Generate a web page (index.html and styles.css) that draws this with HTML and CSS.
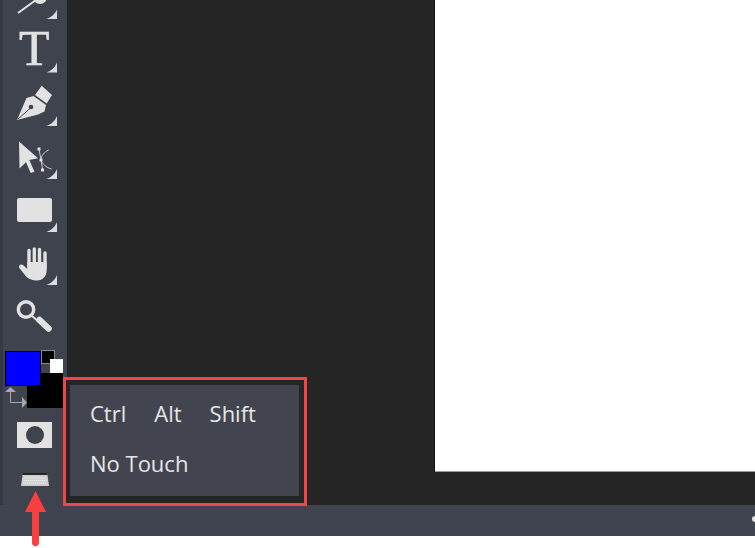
FILE: index.html
```html
<!DOCTYPE html>
<html lang="en">
<head>
<meta charset="utf-8">
<title>Editor</title>
<link rel="stylesheet" href="styles.css">
</head>
<body>
<div class="app">
  <div class="workspace">
    <aside class="toolbar">
      <div class="tool tool-first">
        <svg width="67" height="24" viewBox="0 0 67 24"><path class="ico-line" d="M18 13L36 0"/><circle class="ico" cx="40" cy="-3" r="7"/><path class="corner" d="M57 9.500V19H46.500C51 17.500 55 14 57 9.500Z"/></svg>
      </div>
      <div class="tool">
        <svg class="svg-open" width="67" height="53" viewBox="0 24 67 53"><text class="t-glyph" x="19" y="65">T</text><path class="corner" d="M57 62.500V72.500H46.500C51 71 55 67.500 57 62.500Z"/></svg>
      </div>
      <div class="tool">
        <svg width="67" height="53" viewBox="0 77 67 53"><path class="ico" d="M41.700 85.700L52 95L46.700 103.500L35 95Z"/><path class="ico" d="M17 120L26.500 98L33.500 96L46 105L44.500 111.500L38 114.500Z"/><path class="cut" d="M18 119L31 107.500"/><circle class="cut-dot" cx="31" cy="107" r="2.300"/><path class="corner" d="M57 116V126H46.500C51 124.500 55 121 57 116Z"/></svg>
      </div>
      <div class="tool">
        <svg width="67" height="53" viewBox="0 130 67 53"><path class="ico" d="M19 141.500L38 158.300L29.300 160L34.500 171.700L30.700 173L26 162.300L19.500 168.500Z"/><path class="ico-thin" d="M39 149L41 160L42.700 170M48.700 150C44 152 41 156 41 160C42 164 47 168 51.700 169"/><rect class="ico" x="37.500" y="147.500" width="3" height="3"/><rect class="ico" x="39.500" y="158.500" width="3" height="3"/><rect class="ico" x="41" y="168.500" width="3" height="3"/><path class="corner" d="M57 169V179H46.500C51 177.500 55 174 57 169Z"/></svg>
      </div>
      <div class="tool">
        <svg width="67" height="53" viewBox="0 183 67 53"><rect class="ico" x="17" y="198" width="35" height="24" rx="2"/><path class="corner" d="M57 222V232H46.500C51 230.500 55 227 57 222Z"/></svg>
      </div>
      <div class="tool">
        <svg width="67" height="53" viewBox="0 236 67 53"><path class="finger" d="M29 267V250.500M34.300 265V249M39.500 265V249.500M45 268V253"/><path class="ico" d="M27.300 262H46.700V270C46.700 276 43 280.500 37 280.500C31 280.500 27 278 24.500 274.500L19 267.500C18.500 265 21 263.500 23 265L27.300 269Z"/><path class="corner" d="M57 275V285H46.500C51 283.500 55 280 57 275Z"/></svg>
      </div>
      <div class="tool">
        <svg width="67" height="53" viewBox="0 289 67 53"><circle class="lens" cx="26" cy="309.500" r="7.700"/><path class="ico-link" d="M31.500 315.500L39 322"/><path class="handle" d="M39.500 320L48.500 328.500"/></svg>
      </div>
      <div class="colors">
        <span class="swatch bg"></span>
        <span class="swatch reset-black"></span>
        <span class="swatch reset-white"></span>
        <span class="swatch fg"></span>
        <svg class="swap" width="22" height="22" viewBox="0 0 22 22"><path class="swap-line" d="M5.500 4V15.500H17"/><path class="swap-head" d="M5.500 0L11 5H0ZM22 15.500L17 10V21Z"/></svg>
      </div>
      <div class="mask">
        <span class="mask-hole"></span>
      </div>
      <div class="keyboard">
        <svg width="30" height="15" viewBox="0 0 30 15"><path class="kb-top" d="M3 0H27V2H3Z"/><path class="kb-body" d="M2.500 2H27.500L29 13H1Z"/><path class="kb-keys" d="M4 5H26M3.500 7.500H26.500M3 10H27"/></svg>
      </div>
    </aside>
    <main class="stage">
      <div class="canvas"></div>
    </main>
  </div>
  <footer class="statusbar"><span class="status-dot"></span></footer>
</div>

<div class="popup">
  <div class="popup-panel">
    <div class="popup-row">
      <span>Ctrl</span>
      <span>Alt</span>
      <span>Shift</span>
    </div>
    <div class="popup-row">
      <span>No Touch</span>
    </div>
  </div>
</div>

<svg class="arrow" width="24" height="57" viewBox="0 0 24 57"><path d="M11.500 0L22 21H15V51.500C15 56.500 8 56.500 8 51.500V21H1Z"/></svg>
</body>
</html>
```

FILE: styles.css
```css
* {
  box-sizing: border-box;
}

html,
body {
  margin: 0;
  padding: 0;
  background: #ffffff;
}

body {
  position: relative;
  width: 755px;
  height: 548px;
  overflow: hidden;
  font-family: "Open Sans", sans-serif;
}

.app {
  display: flex;
  flex-direction: column;
  height: 536px;
}

.workspace {
  display: flex;
  height: 505px;
  background: #252525;
}

.toolbar {
  display: flex;
  flex-direction: column;
  flex: none;
  width: 67px;
  height: 505px;
  background: #3f434e;
  box-shadow: inset 3px 0 0 #353842;
}

.tool {
  height: 53px;
  flex: none;
}

.tool-first {
  height: 24px;
}

.tool svg,
.keyboard svg {
  display: block;
}

.tool .svg-open {
  overflow: visible;
}

.ico {
  fill: #e2e2e2;
}

.ico-line {
  fill: none;
  stroke: #e2e2e2;
  stroke-width: 2;
}

.ico-thin {
  fill: none;
  stroke: #c9c9c9;
  stroke-width: 1;
}

.ico-link {
  fill: none;
  stroke: #e2e2e2;
  stroke-width: 2;
}

.corner {
  fill: #dcdcdc;
}

.t-glyph {
  font-family: "Liberation Serif", serif;
  font-size: 50px;
  font-weight: 400;
  fill: #e2e2e2;
  stroke: #e2e2e2;
  stroke-width: 0.600px;
}

.cut {
  fill: none;
  stroke: #3f434e;
  stroke-width: 1;
}

.cut-dot {
  fill: #3f434e;
}

.finger {
  fill: none;
  stroke: #e2e2e2;
  stroke-width: 3.400px;
  stroke-linecap: round;
}

.lens {
  fill: none;
  stroke: #e2e2e2;
  stroke-width: 3.400px;
}

.handle {
  fill: none;
  stroke: #e2e2e2;
  stroke-width: 6.500px;
  stroke-linecap: round;
}

.colors {
  position: relative;
  flex: none;
  height: 72px;
  margin-top: 8px;
}

.swatch {
  position: absolute;
  display: block;
}

.fg {
  left: 5px;
  top: 1px;
  width: 36px;
  height: 35px;
  background: #0000ff;
  border: 1px solid #000000;
}

.bg {
  left: 27px;
  top: 23px;
  width: 36px;
  height: 35px;
  background: #000000;
}

.reset-black {
  left: 41px;
  top: 0;
  width: 14px;
  height: 14px;
  background: #000000;
  border: 1px solid #8a8a8a;
}

.reset-white {
  left: 50px;
  top: 9px;
  width: 13px;
  height: 14px;
  background: #ffffff;
}

.swap {
  position: absolute;
  left: 5px;
  top: 37px;
}

.swap-line {
  fill: none;
  stroke: #a8a8a8;
  stroke-width: 1;
}

.swap-head {
  fill: #a8a8a8;
}

.mask {
  display: flex;
  align-items: center;
  justify-content: center;
  flex: none;
  width: 35px;
  height: 26px;
  margin-left: 17px;
  background: #e2e2e2;
}

.mask-hole {
  display: block;
  width: 18px;
  height: 18px;
  border-radius: 50%;
  background: #3f434e;
}

.keyboard {
  flex: none;
  margin: 25px 0 0 20px;
}

.kb-top {
  fill: #25262b;
}

.kb-body {
  fill: #cfcfcf;
}

.kb-keys {
  fill: none;
  stroke: #ececec;
  stroke-width: 1;
  stroke-dasharray: 1.500 0.500;
}

.stage {
  flex: 1;
  display: flex;
  justify-content: flex-end;
  align-items: flex-start;
}

.canvas {
  width: 320px;
  height: 472px;
  background: #ffffff;
  border-bottom: 1px solid #9a9a9a;
  box-shadow: -1px 0 0 #111111;
}

.statusbar {
  position: relative;
  flex: none;
  height: 31px;
  background: #404450;
}

.status-dot {
  position: absolute;
  right: -3px;
  top: 11px;
  width: 6px;
  height: 6px;
  border-radius: 50%;
  background: #e2e2e2;
}

.popup {
  position: absolute;
  left: 63px;
  top: 377px;
  width: 244px;
  height: 129px;
  padding: 5px 5px 7px 4px;
  border: 3px solid #f34545;
  background: #252525;
}

.popup-panel {
  display: flex;
  flex-direction: column;
  gap: 20px;
  height: 100%;
  padding: 13px 20px;
  background: #42454f;
}

.popup-row {
  display: flex;
  gap: 28px;
  font-size: 22px;
  font-weight: 400;
  line-height: 30px;
  color: #e6e6e6;
}

.arrow {
  position: absolute;
  left: 24px;
  top: 491px;
}

.arrow path {
  fill: #f93f3f;
}
```
